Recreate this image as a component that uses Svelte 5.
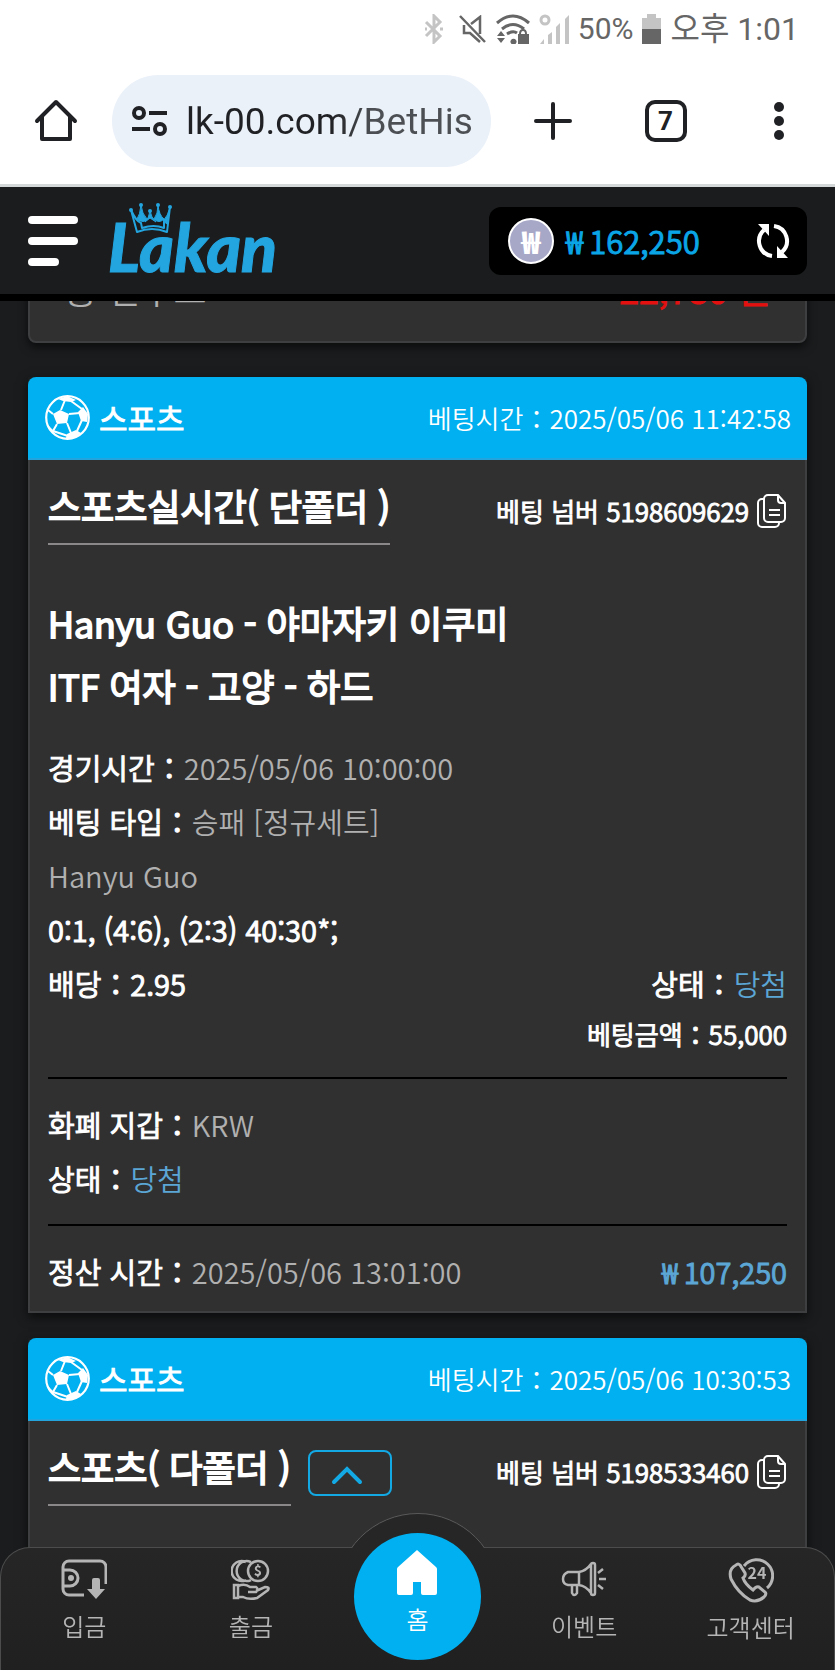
<script lang="ts">
	type Row = { label: string; value: string; win?: boolean };

	const url = 'lk-00.com/BetHis';
	const balance = '162,250';

	const match = ['Hanyu Guo - 야마자키 이쿠미', 'ITF 여자 - 고양 - 하드'];
	const details: Row[] = [
		{ label: '경기시간：', value: '2025/05/06 10:00:00' },
		{ label: '베팅 타입：', value: '승패 [정규세트]' },
		{ label: '', value: 'Hanyu Guo' },
		{ label: '0:1, (4:6), (2:3) 40:30*;', value: '' }
	];
	const wallet: Row[] = [
		{ label: '화폐 지갑：', value: 'KRW' },
		{ label: '상태：', value: '당첨', win: true }
	];

	let expanded = $state(true);
</script>

{#snippet row(item: Row)}
	<p class="row">
		{#if item.label}<b>{item.label}</b>{/if}<span class:win={item.win}>{item.value}</span>
	</p>
{/snippet}

{#snippet cardHead(time: string)}
	<header class="card-head">
		<svg class="ball" viewBox="0 0 45 45" aria-hidden="true">
			<circle cx="22.500" cy="22.500" r="21.300" fill="none" stroke="currentColor" stroke-width="2.200" />
			<path
				fill="currentColor"
				d="M8 19 15 15 24 19 22 28 12 29ZM33 17 38 12 43 19 42 27 36 26ZM13 4 22 1 31 5 26 7 18 6ZM22 39 31 35 36 38 30 43 21 43ZM2 29 9 36 8 38 3 33Z"
			/>
			<path
				fill="none"
				stroke="currentColor"
				stroke-width="2"
				d="M20 5 16 15M8 19 3 15M24 19 35 18M22 28 26 38M12 29 8 36M26 6 37 14M37 25 32 36M8 36 23 41"
			/>
		</svg>
		<strong>스포츠</strong>
		<time>베팅시간：{time}</time>
	</header>
{/snippet}

{#snippet betNumber(number: string)}
	<div class="number">
		<b>베팅 넘버 {number}</b>
		<button aria-label="복사">
			<svg width="30" height="36" viewBox="0 0 30 36" fill="none" stroke="currentColor" stroke-width="2">
				<path d="M11 2h10l7 8v15a4 4 0 0 1-4 4H11a4 4 0 0 1-4-4V6a4 4 0 0 1 4-4ZM21 2v5a3 3 0 0 0 3 3h4M7 6H5a4 4 0 0 0-4 4v20a4 4 0 0 0 4 4h13a4 4 0 0 0 4-4M12 17h11M12 22h11" />
			</svg>
		</button>
	</div>
{/snippet}

<div class="screen" lang="ko">
	<div class="status">
		<svg class="faint bluetooth" width="20" height="30" viewBox="0 0 20 30" fill="none" stroke="currentColor" stroke-width="3">
			<path d="m2 8 14 14-6 6V2l6 6L2 22" />
			<path d="M1 15h2M16 15h3" />
		</svg>
		<svg width="28" height="28" viewBox="0 0 28 28" fill="none" stroke="currentColor" stroke-width="2.500">
			<path d="m1 1 25 26M5 10v8h6l10 9M12 9l9-7v17" />
		</svg>
		<svg width="34" height="30" viewBox="0 0 34 30" fill="none" stroke="currentColor" stroke-width="3">
			<path d="M1 9q16-14 32 0M6 15q11-9 22 0M11 20q6-4 10-1" />
			<path fill="currentColor" stroke="none" d="M1 22h8l-4-5ZM1 24h8l-4 5ZM15 26a3 3 0 1 0 5 0 3 3 0 0 0-5 0M22 20h11v10H22Z" />
			<path stroke-width="2" d="M24 20q0-4 3-4t3 4" />
		</svg>
		<svg class="faint" width="30" height="30" viewBox="0 0 30 30" fill="currentColor">
			<circle cx="6" cy="6" r="4" fill="none" stroke="currentColor" stroke-width="3" />
			<path d="M1 30h4v-5ZM9 30h4V18l-4 3ZM17 30h4V9l-4 4ZM26 30h4V1l-4 4Z" />
		</svg>
		<span>50%</span>
		<svg width="19" height="30" viewBox="0 0 19 30">
			<path fill="#c4c4c4" d="M5 0h9v4h5v11H0V4h5Z" />
			<path fill="#666" d="M0 15h19v15H0Z" />
		</svg>
		<span class="clock">오후 1:01</span>
	</div>

	<div class="browser">
		<button aria-label="홈페이지">
			<svg width="44" height="44" viewBox="0 0 44 44" fill="none" stroke="currentColor" stroke-width="4" stroke-linecap="round" stroke-linejoin="round">
				<path d="M3 22 22 3l19 19M8 18v22h28V18" />
			</svg>
		</button>
		<label class="address">
			<svg width="36" height="30" viewBox="0 0 36 30" fill="none" stroke="currentColor" stroke-width="4">
				<circle cx="7" cy="7" r="5" />
				<circle cx="28" cy="23" r="5" />
				<path d="M17 7h18M0 23h18" />
			</svg>
			<input type="text" value={url} aria-label="주소" />
		</label>
		<div class="actions">
			<button aria-label="새 탭">
				<svg width="38" height="38" viewBox="0 0 38 38" stroke="currentColor" stroke-width="4" stroke-linecap="round">
					<path d="M19 2v34M2 19h34" />
				</svg>
			</button>
			<button aria-label="탭 목록"><span class="tab-count">7</span></button>
			<button aria-label="메뉴">
				<svg width="10" height="38" viewBox="0 0 10 38" fill="currentColor">
					<circle cx="5" cy="5" r="5" />
					<circle cx="5" cy="19" r="5" />
					<circle cx="5" cy="33" r="5" />
				</svg>
			</button>
		</div>
	</div>

	<header class="top">
		<button class="burger" aria-label="전체 메뉴"><i></i><i></i><i></i></button>
		<a class="logo" href="/">
			<svg class="crown" width="46" height="33" viewBox="0 0 46 33" fill="none" stroke="currentColor" stroke-width="2" stroke-linejoin="round">
				<path d="M3 8 9 30q15-6 30 0L42 5M3 8q5 11 10 13l1 5q12-4 22 0V17" />
				<path fill="currentColor" stroke-width="1" d="M13 3q-1 10-4 14 7 5 10 0-5-5-6-14ZM30 3q0 9-4 14 5 5 10 0-5-4-6-14ZM22 9q-1 7-5 11l5-4 6 4q-5-5-6-11ZM42 5q-2 9-7 14l4 3Z" />
				<g fill="currentColor" stroke="none">
					<circle cx="3" cy="8" r="2" />
					<circle cx="13" cy="3" r="2" />
					<circle cx="22" cy="9" r="2" />
					<circle cx="30" cy="3" r="2" />
					<circle cx="42" cy="5" r="2" />
				</g>
			</svg>
			Lakan
		</a>
		<div class="balance">
			<span class="coin">₩</span>
			<b>₩&thinsp;{balance}</b>
			<button aria-label="새로고침">
				<svg width="34" height="34" viewBox="0 0 34 34" fill="none" stroke="currentColor" stroke-width="4">
					<path d="M18 2a15 15 0 0 1 8 26M16 32A15 15 0 0 1 8 6" />
					<path fill="currentColor" stroke="none" d="M2 0h11v12ZM32 34H21V22Z" />
				</svg>
			</button>
		</div>
	</header>

	<main>
		<section class="card previous">
			<span>총 전우트</span>
			<b>22,780 원</b>
		</section>

		<article class="card">
			{@render cardHead('2025/05/06 11:42:58')}
			<div class="body">
				<div class="title">
					<h2>스포츠실시간( 단폴더 )</h2>
					{@render betNumber('5198609629')}
				</div>
				<div class="match">
					{#each match as line}
						<h3>{line}</h3>
					{/each}
				</div>
				{#each details as item}
					{@render row(item)}
				{/each}
				<div class="split">
					<p class="row"><b>배당：2.95</b></p>
					{@render row({ label: '상태：', value: '당첨', win: true })}
				</div>
				<p class="stake"><b>베팅금액：55,000</b></p>
				<hr />
				{#each wallet as item}
					{@render row(item)}
				{/each}
				<hr />
				<div class="split">
					{@render row({ label: '정산 시간：', value: '2025/05/06 13:01:00' })}
					<p class="row win"><b>₩&thinsp;107,250</b></p>
				</div>
			</div>
		</article>

		<article class="card">
			{@render cardHead('2025/05/06 10:30:53')}
			<div class="body">
				<div class="title">
					<h2>스포츠( 다폴더 )</h2>
					<button class="toggle" aria-label="접기" aria-expanded={expanded} onclick={() => (expanded = !expanded)}>
						<svg width="38" height="24" viewBox="0 0 38 24" fill="none" stroke="currentColor" stroke-width="4" stroke-linecap="round">
							<path d="m3 21 13-13 13 13" />
						</svg>
					</button>
					{@render betNumber('5198533460')}
				</div>
			</div>
		</article>
	</main>

	<nav>
		<div class="hump"></div>
		<a href="/deposit">
			<svg width="46" height="44" viewBox="0 0 46 44" fill="none" stroke="currentColor" stroke-width="3">
				<path d="M23 37H8a6 6 0 0 1-6-6V9a6 6 0 0 1 6-6h31a6 6 0 0 1 6 6v17M2 12h7a8 8 0 0 1 0 16H2" />
				<circle cx="10" cy="20" r="3" fill="currentColor" stroke="none" />
				<path fill="currentColor" stroke="none" d="M31 22q0-2 2-2h4q2 0 2 2v9h5L35 41l-9-10h5Z" />
			</svg>
			입금
		</a>
		<a href="/withdraw">
			<svg width="40" height="44" viewBox="0 0 40 44" fill="none" stroke="currentColor" stroke-width="2.500">
				<circle cx="27" cy="13" r="10" />
				<path d="M20 4a10 10 0 1 0 0 18M15 4a10 10 0 1 0 0 18M3 27h4v13H3ZM7 28q7-3 12 1h6q3 2 0 5h-8M25 33l9-4q5 0 3 3L26 40q-8 2-14-1H7" />
				<text x="27" y="18" font-size="14" font-weight="700" text-anchor="middle" fill="currentColor" stroke="none">$</text>
			</svg>
			출금
		</a>
		<a class="home" href="/">
			<svg width="40" height="45" viewBox="0 0 40 45" fill="currentColor">
				<path d="M20 0 39 17q1 1 1 2v24q0 2-2 2H26q-2 0-2-2V32h-8v11q0 2-2 2H2q-2 0-2-2V19q0-1 1-2Z" />
			</svg>
			홈
		</a>
		<a href="/event">
			<svg width="46" height="44" viewBox="0 0 46 44" fill="none" stroke="currentColor" stroke-width="2.500" stroke-linejoin="round">
				<path d="M7 14h11v13H7q-5-1-5-6t5-7ZM18 14q7-1 12-8v29q-5-7-12-8M30 7q0-2 2-2t2 2v28q0 2-2 2t-2-2M11 27v8q2 4 5 0v-8M37 15l5-4M38 21h7M37 27l5 4" />
			</svg>
			이벤트
		</a>
		<a href="/support">
			<svg width="46" height="46" viewBox="0 0 46 46" fill="none" stroke="currentColor" stroke-width="3">
				<path d="M16 9a16 16 0 1 1 23 22" />
				<path d="M8 8Q0 12 3 22q7 14 19 21 7 3 14-3 3-3 1-5l-6-5q-3-1-6 3Q17 27 15 21q3-2 2-5l-5-8q-2-2-4 0Z" />
				<text x="29" y="22" font-size="16" font-weight="700" text-anchor="middle" fill="currentColor" stroke="none">24</text>
			</svg>
			고객센터
		</a>
	</nav>
</div>

<style>
	:global(body) {
		margin: 0;
		background: #1a1c1d;
	}

	.screen {
		display: flex;
		flex-direction: column;
		height: 100vh;
		overflow: hidden;
		color: #fff;
		font-family: 'Noto Sans CJK KR', sans-serif;
		font-size: 29px;
		font-weight: 350;
		line-height: 54px;
	}

	button {
		display: flex;
		padding: 0;
		border: 0;
		background: none;
		color: inherit;
		font: inherit;
	}

	a {
		color: inherit;
		text-decoration: none;
	}

	h2,
	h3,
	p {
		margin: 0;
		white-space: pre;
	}

	svg {
		flex: none;
	}

	.status {
		display: flex;
		align-items: center;
		justify-content: flex-end;
		gap: 9px;
		height: 58px;
		padding-right: 36px;
		background: #fff;
		color: #666;
		font-family: Roboto, 'Noto Sans CJK KR', sans-serif;
		font-size: 30px;
		font-weight: 400;
	}

	.bluetooth {
		margin-right: 6px;
	}

	.clock {
		font-size: 32px;
	}

	.faint {
		color: #c4c4c4;
	}

	.browser {
		display: flex;
		align-items: center;
		height: 126px;
		padding-left: 34px;
		border-bottom: 3px solid #d5d8d9;
		background: #fff;
		color: #202124;
	}

	.address {
		display: flex;
		flex: 1;
		align-items: center;
		gap: 18px;
		min-width: 0;
		height: 92px;
		box-sizing: border-box;
		margin: 0 5px 0 34px;
		padding: 0 18px 0 20px;
		border-radius: 46px;
		background: #ebf1f9;
	}

	.address input {
		flex: 1;
		min-width: 0;
		padding: 0;
		border: 0;
		background: linear-gradient(90deg, #202124 50%, #4c5054 65%);
		background-clip: text;
		color: transparent;
		font-family: Roboto, sans-serif;
		font-size: 37px;
	}

	.actions {
		display: grid;
		grid-template-columns: repeat(3, 113px);
	}

	.actions button {
		align-items: center;
		justify-content: center;
	}

	.tab-count {
		width: 34px;
		border: 4px solid #202124;
		border-radius: 10px;
		font-family: Roboto, sans-serif;
		font-size: 26px;
		font-weight: 700;
		line-height: 34px;
	}

	.top {
		display: flex;
		align-items: center;
		height: 107px;
		padding: 0 28px;
		border-bottom: 7px solid #000;
		background: #1a1c1d;
	}

	.burger {
		flex-direction: column;
		gap: 13px;
		width: 51px;
	}

	.burger i {
		width: 50px;
		height: 8px;
		border-radius: 4px;
		background: #fff;
	}

	.burger i:last-child {
		width: 31px;
	}

	.logo {
		position: relative;
		margin: 12px auto 0 29px;
		color: #23a5e0;
		font-family: Lato, sans-serif;
		font-size: 66px;
		font-style: italic;
		font-weight: 900;
		-webkit-text-stroke: 1px;
	}

	.crown {
		position: absolute;
		top: -18px;
		left: 20px;
	}

	.balance {
		display: flex;
		align-items: center;
		width: 318px;
		height: 68px;
		box-sizing: border-box;
		padding: 0 17px 0 19px;
		border-radius: 12px;
		background: #000;
		color: #0aa5e6;
		font-size: 31px;
	}

	.balance b {
		flex: 1;
	}

	.balance button {
		color: #fff;
	}

	.coin {
		width: 42px;
		margin-right: 12px;
		border: 2px solid #fff;
		border-radius: 50%;
		background: #a7a7c8;
		color: #fff;
		font-weight: 900;
		line-height: 42px;
		text-align: center;
	}

	main {
		flex: 1;
		min-height: 0;
		padding: 0 28px;
		overflow: hidden;
	}

	/* heavier stroke over the light face keeps the digits narrow */
	b,
	h2,
	h3,
	strong {
		font-weight: 350;
		-webkit-text-stroke: 1px;
	}

	.card {
		margin-bottom: 25px;
		box-shadow: 0 4px 10px #0009;
	}

	.previous {
		display: flex;
		justify-content: space-between;
		height: 100px;
		box-sizing: border-box;
		margin: -58px 0 34px;
		padding: 16px 34px 0;
		border: 2px solid #3e3f40;
		border-radius: 0 0 8px 8px;
		background: #303030;
		color: #b0b0b0;
		font-size: 36px;
	}

	.previous b {
		color: #e41010;
	}

	.card-head {
		display: flex;
		align-items: center;
		height: 81px;
		padding: 0 16px 0 17px;
		border-bottom: 2px solid #24a4dc;
		border-radius: 8px 8px 0 0;
		background: #00b0f0;
	}

	.card-head strong {
		font-size: 31px;
	}

	.ball {
		width: 45px;
		height: 45px;
		margin-right: 9px;
	}

	.card-head time {
		margin-left: auto;
		font-size: 26px;
	}

	.body {
		padding: 18px 18px 13px;
		border: 2px solid #3e3f40;
		border-top: 0;
		background: #303030;
	}

	.title {
		display: flex;
		align-items: flex-start;
		gap: 17px;
		margin-bottom: 46px;
	}

	h2,
	h3 {
		font-size: 36px;
		-webkit-text-stroke: 2px;
	}

	h2 {
		padding-bottom: 11px;
		border-bottom: 2px solid #8b8889;
	}

	h3 {
		line-height: 63px;
	}

	.match {
		margin-bottom: 23px;
	}

	.number {
		display: flex;
		align-items: center;
		gap: 8px;
		height: 66px;
		margin-left: auto;
		font-size: 26px;
	}

	.toggle {
		align-items: center;
		justify-content: center;
		width: 84px;
		height: 46px;
		box-sizing: border-box;
		margin-top: 11px;
		border: 2px solid #13a9e4;
		border-radius: 8px;
		color: #13a9e4;
	}

	.row {
		color: #b0b0b0;
	}

	.row b {
		color: #fff;
	}

	.row .win,
	.win b {
		color: #5ba6d5;
	}

	.split {
		display: flex;
		justify-content: space-between;
	}

	.stake {
		font-size: 26px;
		line-height: 48px;
		text-align: right;
	}

	hr {
		margin: 19px 0 18px;
		border: 0;
		border-top: 2px solid #000;
	}

	nav {
		position: fixed;
		right: 0;
		bottom: 0;
		left: 0;
		display: grid;
		grid-template-rows: 122px;
		grid-template-columns: repeat(5, 1fr);
		border: 1px solid #4c4c4c;
		border-bottom: 0;
		border-radius: 30px 30px 0 0;
		background: linear-gradient(#262626, #202020);
		color: #b5b5b5;
		font-size: 24px;
		line-height: 36px;
	}

	nav a {
		position: relative;
		display: flex;
		flex-direction: column;
		align-items: center;
		justify-content: center;
		gap: 6px;
		padding-bottom: 17px;
	}

	/* only the top slice of the circle rises above the bar */
	.hump {
		position: absolute;
		top: -35px;
		left: 50%;
		width: 164px;
		height: 35px;
		overflow: hidden;
		transform: translateX(-50%);
	}

	.hump::before {
		display: block;
		height: 164px;
		box-sizing: border-box;
		border: 1px solid #5a5a5a;
		border-radius: 50%;
		background: #262626;
		content: '';
	}

	nav .home {
		justify-self: center;
		align-self: end;
		width: 127px;
		height: 127px;
		box-sizing: border-box;
		margin-bottom: 10px;
		padding-bottom: 7px;
		border-radius: 50%;
		background: #00b0f0;
		color: #fff;
	}
</style>
